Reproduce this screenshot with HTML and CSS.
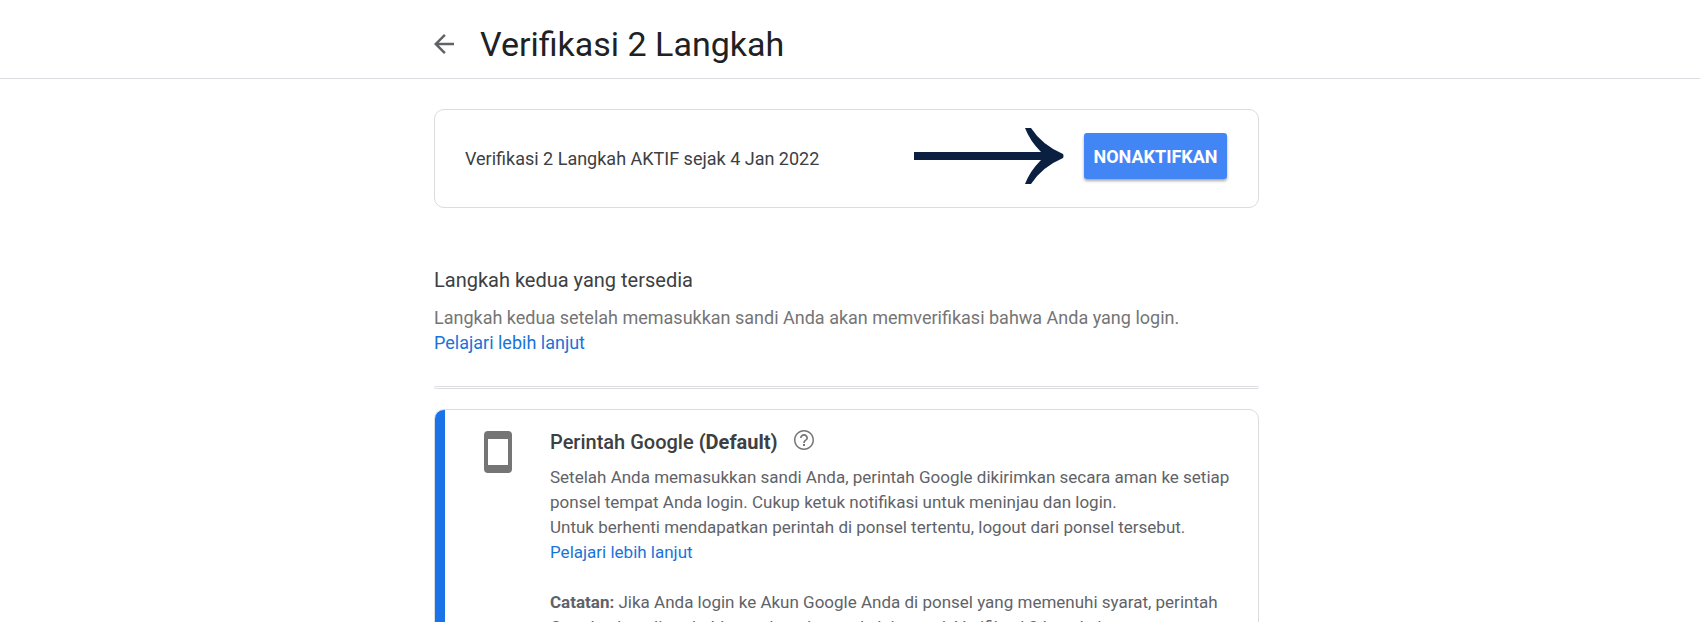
FILE: index.html
```html
<!DOCTYPE html>
<html lang="id">
<head>
<meta charset="utf-8">
<meta name="viewport" content="width=device-width, initial-scale=1">
<title>Verifikasi 2 Langkah</title>
<link rel="stylesheet" href="styles.css">
</head>
<body>
<header class="topbar">
  <div class="wrap topbar-inner">
    <button class="back" type="button" aria-label="Kembali">
      <svg viewBox="4 4 16 16" width="20" height="20" aria-hidden="true"><path fill="#5f6368" d="M20 11H7.83l5.59-5.59L12 4l-8 8 8 8 1.41-1.41L7.83 13H20v-2z"/></svg>
    </button>
    <h1 class="title">Verifikasi 2 Langkah</h1>
  </div>
</header>
<main class="wrap">
  <section class="card status">
    <p class="status-text">Verifikasi 2 Langkah AKTIF sejak 4 Jan 2022</p>
    <svg class="pointer" viewBox="0 0 150 58" width="150" height="58" aria-hidden="true"><path fill="#0b2040" d="M0 25H127Q116 14 111 1H117Q128 18 149 27Q150 29 149 31Q128 40 117 57H111Q116 44 127 33H0Z"/></svg>
    <button class="off" type="button">NONAKTIFKAN</button>
  </section>
  <section class="intro">
    <h2 class="intro-title">Langkah kedua yang tersedia</h2>
    <p class="intro-text">Langkah kedua setelah memasukkan sandi Anda akan memverifikasi bahwa Anda yang login. <a class="link block" href="#lebih">Pelajari lebih lanjut</a></p>
  </section>
  <hr class="rule">
  <section class="card method">
    <svg class="phone" viewBox="0 0 28 42" width="28" height="42" aria-hidden="true"><path fill="#757575" fill-rule="evenodd" d="M4 0H24Q28 0 28 4V38Q28 42 24 42H4Q0 42 0 38V4Q0 0 4 0ZM4 8V34H24V8Z"/></svg>
    <div class="method-body">
      <div class="method-head">
        <h3 class="method-title">Perintah Google <b>(Default)</b></h3>
        <button class="help" type="button" aria-label="Bantuan">
          <svg viewBox="2 2 20 20" width="20" height="20" aria-hidden="true"><path fill="#757575" d="M11 18h2v-2h-2v2zm1-16C6.48 2 2 6.48 2 12s4.48 10 10 10 10-4.48 10-10S17.52 2 12 2zm0 18.500c-4.700 0-8.500-3.800-8.500-8.500s3.800-8.500 8.500-8.500 8.500 3.800 8.500 8.500-3.800 8.500-8.500 8.500zm0-14.500c-2.210 0-4 1.790-4 4h1.700c0-1.300 1-2.300 2.300-2.300s2.300 1 2.300 2.300c0 2-3.100 1.750-3.100 5h1.700c0-2.250 3.100-2.500 3.100-5 0-2.210-1.790-4-4-4z"/></svg>
        </button>
      </div>
      <p class="text">Setelah Anda memasukkan sandi Anda, perintah Google dikirimkan secara aman ke setiap ponsel tempat Anda login. Cukup ketuk notifikasi untuk meninjau dan login.<br>Untuk berhenti mendapatkan perintah di ponsel tertentu, logout dari ponsel tersebut. <a class="link block" href="#perintah">Pelajari lebih lanjut</a></p>
      <p class="text note"><b>Catatan:</b> Jika Anda login ke Akun Google Anda di ponsel yang memenuhi syarat, perintah Google akan ditambahkan sebagai metode lain untuk Verifikasi 2 Langkah.</p>
    </div>
  </section>
</main>
</body>
</html>
```
FILE: styles.css
```css
* { box-sizing: border-box; }
html { overflow: hidden; }
body { margin: 0; padding-right: 7px; background: #fff; color: #3c4043; font-family: Roboto, "Liberation Sans", sans-serif; }
h1, h2, h3, p { margin: 0; font-weight: 400; }
button { border: 0; padding: 0; background: none; font-family: inherit; cursor: pointer; }
svg { display: block; flex: none; }
.wrap { max-width: 825px; margin: 0 auto; }
.topbar { margin-right: -7px; padding-right: 7px; border-bottom: 1px solid #dadce0; }
.topbar-inner { display: flex; align-items: center; gap: 26px; padding: 20px 0 10px; }
.title { font-size: 34px; line-height: 48px; color: #202124; }
.card { border: 1px solid #dadce0; border-radius: 10px; }
.status { display: flex; align-items: center; margin-top: 30px; padding: 17px 31px 22px 30px; }
.status-text { flex: 1; padding-top: 6px; font-size: 18px; line-height: 24px; }
.pointer { margin-right: 20px; }
.off { width: 143px; height: 46px; border-radius: 3px; background: #4285f4; color: #fff; font-size: 18px; font-weight: 700; box-shadow: 0 2px 3px rgba(0, 0, 0, .35); }
.intro { padding: 59px 0 31px; }
.intro-title { font-size: 20px; line-height: 26px; }
.intro-text { margin-top: 12px; font-size: 18px; line-height: 25px; color: #757575; }
.link { color: #1a73d8; text-decoration: none; }
.block { display: block; width: fit-content; }
.rule { height: 3px; margin: 0; border: 1px solid #dadce0; border-radius: 2px; }
.method { display: flex; align-items: flex-start; gap: 38px; margin-top: 20px; padding: 20px 24px 30px 49px; background: linear-gradient(90deg, #1a73e8 10px, #fff 10px); }
.phone { margin-top: 1px; }
.method-body { flex: 1; }
.method-head { display: flex; align-items: flex-start; gap: 16px; }
.method-title { font-size: 20px; line-height: 24px; font-weight: 500; }
.text { margin-top: 11px; font-size: 17px; line-height: 25px; color: #5f6368; }
.note { margin-top: 25px; }
```
